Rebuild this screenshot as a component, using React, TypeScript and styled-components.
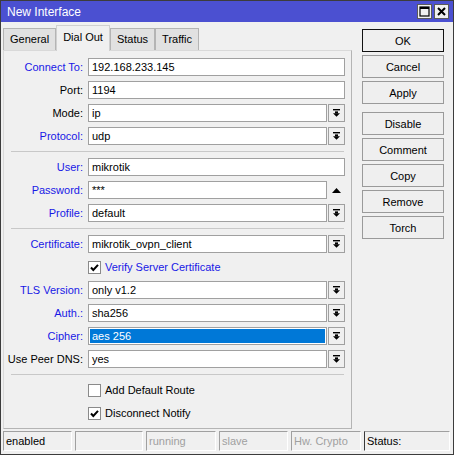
import styled, { createGlobalStyle } from "styled-components";

const GlobalStyle = createGlobalStyle`
  html, body {
    margin: 0;
    padding: 0;
    background: #ffffff;
  }
  * {
    box-sizing: border-box;
  }
`;

const Window = styled.div`
  width: 454px;
  height: 455px;
  border: 1px solid #3c3c3c;
  background: #f0f0f0;
  display: flex;
  flex-direction: column;
  font-family: "Liberation Sans", Arial, sans-serif;
  font-size: 11px;
  color: #000;
  overflow: hidden;
`;

const TitleBar = styled.div`
  height: 21px;
  background: #4b50d1;
  display: flex;
  align-items: center;
  padding: 0 4px 0 6px;
`;

const Title = styled.div`
  flex: 1;
  color: #fff;
  font-size: 12px;
`;

const TitleButton = styled.div`
  width: 15px;
  height: 15px;
  margin-left: 2px;
  background: #f0f0f0;
  border: 1px solid #5a5a5a;
  display: flex;
  align-items: center;
  justify-content: center;
`;

const Main = styled.div`
  display: flex;
  padding: 3px 0 0 2px;
`;

const LeftSide = styled.div`
  width: 349px;
  display: flex;
  flex-direction: column;
`;

const Tabs = styled.div`
  height: 25px;
  display: flex;
  align-items: flex-end;
  position: relative;
  z-index: 1;
`;

const Tab = styled.div<{ $active?: boolean }>`
  height: ${(p) => (p.$active ? "26px" : "22px")};
  margin-bottom: ${(p) => (p.$active ? "-1px" : "0")};
  padding: ${(p) => (p.$active ? "4px 6px 0" : "3px 6px 0")};
  background: ${(p) => (p.$active ? "#f0f0f0" : "#e1e1e1")};
  border: 1px solid ${(p) => (p.$active ? "#d0d0d0" : "#b4b4b4")};
  border-bottom: none;
  white-space: nowrap;
  line-height: 15px;
`;

const Panel = styled.div`
  height: 379px;
  border: 1px solid #b4b4b4;
  border-top-color: #d9d9d9;
  border-left-color: #d9d9d9;
  padding: 7px 0 0 0;
  display: flex;
  flex-direction: column;
  gap: 5px;
`;

const Row = styled.div`
  height: 18px;
  display: flex;
  align-items: center;
`;

const Label = styled.div<{ $blue?: boolean }>`
  width: 79px;
  text-align: right;
  white-space: nowrap;
  color: ${(p) => (p.$blue ? "#1818e6" : "#000")};
`;

const FieldArea = styled.div`
  width: 257px;
  margin-left: 5px;
  height: 18px;
  display: flex;
`;

const Input = styled.div<{ $selected?: boolean }>`
  flex: 1;
  height: 18px;
  background: #fff;
  border: 1px solid #a0a0a0;
  padding: ${(p) => (p.$selected ? "1px" : "0 0 0 3px")};
  line-height: 16px;
  white-space: nowrap;
  overflow: hidden;
`;

const Selection = styled.div`
  height: 14px;
  background: #0078d7;
  color: #fff;
  padding-left: 2px;
  line-height: 14px;
`;

const DropButton = styled.div`
  width: 17px;
  height: 18px;
  margin-left: 1px;
  background: #f0f0f0;
  border: 1px solid #a0a0a0;
  display: flex;
  align-items: center;
  justify-content: center;
`;

const SideArrow = styled.div`
  width: 17px;
  margin-left: 1px;
  display: flex;
  align-items: center;
  justify-content: center;
`;

const Separator = styled.div`
  height: 3px;
  margin: 0 7px 0 7px;
  display: flex;
  align-items: center;
  &::before {
    content: "";
    flex: 1;
    height: 1px;
    background: #c8c8c8;
  }
`;

const CheckRow = styled.div`
  height: 18px;
  display: flex;
  align-items: center;
  padding-left: 84px;
`;

const Box = styled.div`
  width: 13px;
  height: 13px;
  background: #fff;
  border: 1px solid #8a8a8a;
  display: flex;
  align-items: center;
  justify-content: center;
`;

const CheckText = styled.span<{ $blue?: boolean }>`
  margin-left: 4px;
  color: ${(p) => (p.$blue ? "#1818e6" : "#000")};
`;

const Buttons = styled.div`
  margin-left: 10px;
  padding-top: 4px;
  display: flex;
  flex-direction: column;
  gap: 3px;
`;

const Button = styled.div<{ $default?: boolean; $spaced?: boolean }>`
  width: 82px;
  height: 23px;
  margin-top: ${(p) => (p.$spaced ? "5px" : "0")};
  background: #efefef;
  border: 1px solid ${(p) => (p.$default ? "#111" : "#9a9a9a")};
  display: flex;
  align-items: center;
  justify-content: center;
`;

const StatusBar = styled.div`
  margin-top: 2px;
  height: 20px;
  display: flex;
  gap: 3px;
  padding-left: 2px;
`;

const StatusCell = styled.div<{ $w: number; $dim?: boolean; $dark?: boolean }>`
  width: ${(p) => p.$w}px;
  height: 20px;
  border: 1px solid #fff;
  border-top-color: #a0a0a0;
  border-left-color: ${(p) => (p.$dark ? "#3a3a3a" : "#a0a0a0")};
  padding-left: 2px;
  line-height: 18px;
  color: ${(p) => (p.$dim ? "#a0a0a0" : "#000")};
  white-space: nowrap;
  overflow: hidden;
`;

const DropIcon = () => (
  <svg width="7" height="8" viewBox="0 0 7 8">
    <rect x="0" y="0" width="7" height="1.4" fill="#000" />
    <rect x="2" y="2.4" width="3" height="2" fill="#000" />
    <polygon points="0,4.2 7,4.2 3.5,7.8" fill="#000" />
  </svg>
);

const Check = () => (
  <svg width="11" height="11" viewBox="0 0 11 11">
    <path d="M2 5.5 L4.3 8 L9 2.8" fill="none" stroke="#000" strokeWidth="2" />
  </svg>
);

type Field = {
  label: string;
  value: string;
  blue?: boolean;
  kind: "text" | "combo" | "password";
  selected?: boolean;
};

const FieldRow = ({ f }: { f: Field }) => (
  <Row>
    <Label $blue={f.blue}>{f.label}</Label>
    <FieldArea>
      <Input $selected={f.selected}>
        {f.selected ? <Selection>{f.value}</Selection> : f.value}
      </Input>
      {f.kind === "combo" && (
        <DropButton>
          <DropIcon />
        </DropButton>
      )}
      {f.kind === "password" && (
        <SideArrow>
          <svg width="9" height="5" viewBox="0 0 9 5">
            <polygon points="0,5 9,5 4.5,0" fill="#000" />
          </svg>
        </SideArrow>
      )}
    </FieldArea>
  </Row>
);

const group1: Field[] = [
  { label: "Connect To:", value: "192.168.233.145", blue: true, kind: "text" },
  { label: "Port:", value: "1194", kind: "text" },
  { label: "Mode:", value: "ip", kind: "combo" },
  { label: "Protocol:", value: "udp", blue: true, kind: "combo" },
];

const group2: Field[] = [
  { label: "User:", value: "mikrotik", blue: true, kind: "text" },
  { label: "Password:", value: "***", blue: true, kind: "password" },
  { label: "Profile:", value: "default", blue: true, kind: "combo" },
];

const group3: Field[] = [
  { label: "TLS Version:", value: "only v1.2", blue: true, kind: "combo" },
  { label: "Auth.:", value: "sha256", blue: true, kind: "combo" },
  { label: "Cipher:", value: "aes 256", blue: true, kind: "combo", selected: true },
  { label: "Use Peer DNS:", value: "yes", kind: "combo" },
];

const App = () => {
  return (
    <>
      <GlobalStyle />
      <Window>
        <TitleBar>
          <Title>New Interface</Title>
          <TitleButton>
            <svg width="11" height="11" viewBox="0 0 11 11">
              <rect x="1" y="1" width="9" height="9" fill="none" stroke="#000" strokeWidth="1.2" />
              <rect x="1" y="1" width="9" height="2" fill="#000" />
            </svg>
          </TitleButton>
          <TitleButton>
            <svg width="9" height="9" viewBox="0 0 9 9">
              <path d="M1 1 L8 8 M8 1 L1 8" stroke="#000" strokeWidth="2" />
            </svg>
          </TitleButton>
        </TitleBar>
        <Main>
          <LeftSide>
            <Tabs>
              <Tab>General</Tab>
              <Tab $active>Dial Out</Tab>
              <Tab>Status</Tab>
              <Tab>Traffic</Tab>
            </Tabs>
            <Panel>
              {group1.map((f) => (
                <FieldRow key={f.label} f={f} />
              ))}
              <Separator />
              {group2.map((f) => (
                <FieldRow key={f.label} f={f} />
              ))}
              <Separator />
              <FieldRow
                f={{ label: "Certificate:", value: "mikrotik_ovpn_client", blue: true, kind: "combo" }}
              />
              <CheckRow>
                <Box>
                  <Check />
                </Box>
                <CheckText $blue>Verify Server Certificate</CheckText>
              </CheckRow>
              {group3.map((f) => (
                <FieldRow key={f.label} f={f} />
              ))}
              <Separator />
              <CheckRow>
                <Box />
                <CheckText>Add Default Route</CheckText>
              </CheckRow>
              <CheckRow>
                <Box>
                  <Check />
                </Box>
                <CheckText>Disconnect Notify</CheckText>
              </CheckRow>
            </Panel>
          </LeftSide>
          <Buttons>
            <Button $default>OK</Button>
            <Button>Cancel</Button>
            <Button>Apply</Button>
            <Button $spaced>Disable</Button>
            <Button>Comment</Button>
            <Button>Copy</Button>
            <Button>Remove</Button>
            <Button>Torch</Button>
          </Buttons>
        </Main>
        <StatusBar>
          <StatusCell $w={69}>enabled</StatusCell>
          <StatusCell $w={68}></StatusCell>
          <StatusCell $w={70} $dim>running</StatusCell>
          <StatusCell $w={69} $dim>slave</StatusCell>
          <StatusCell $w={70} $dim>Hw. Crypto</StatusCell>
          <StatusCell $w={86} $dark>Status:</StatusCell>
        </StatusBar>
      </Window>
    </>
  );
};

export default App;
